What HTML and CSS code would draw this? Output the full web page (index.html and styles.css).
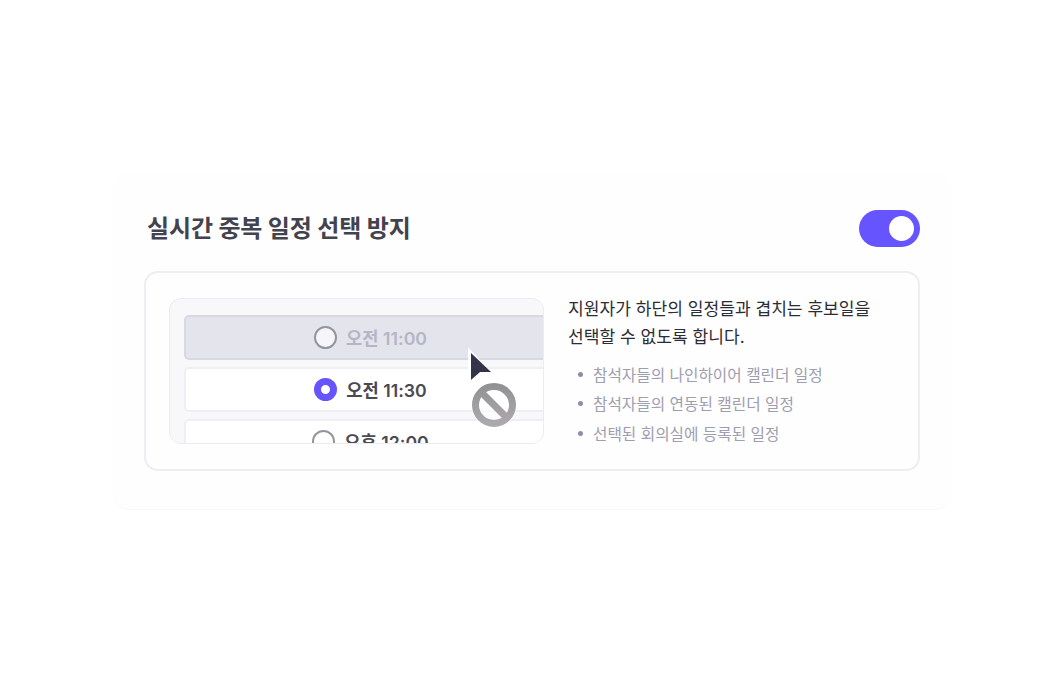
FILE: index.html
```html
<!DOCTYPE html>
<html lang="ko">
<head>
  <meta charset="UTF-8">
  <meta name="viewport" content="width=device-width, initial-scale=1.0">
  <title>실시간 중복 일정 선택 방지</title>
  <link rel="stylesheet" href="styles.css">
</head>
<body>
  <div class="card">
    <div class="card-header">
      <h1>실시간 중복 일정 선택 방지</h1>
      <div class="toggle"><span class="toggle-knob"></span></div>
    </div>

    <div class="panel">
      <div class="preview">
        <div class="slot-list">
          <div class="slot slot-disabled">
            <span class="radio"></span>
            <span>오전 11:00</span>
          </div>
          <div class="slot">
            <span class="radio radio-on"></span>
            <span>오전 11:30</span>
          </div>
          <div class="slot">
            <span class="radio"></span>
            <span>오후 12:00</span>
          </div>
        </div>

        <svg class="cursor" width="28" height="38" viewBox="0 0 28 38" xmlns="http://www.w3.org/2000/svg">
          <path d="M2 1v34l3 1 10-9h11z" fill="#ffffff" opacity="0.9"/>
          <path d="M5 7v27l9-8h11z" fill="#33344a"/>
        </svg>
        <svg class="blocked" width="46" height="46" viewBox="0 0 46 46" xmlns="http://www.w3.org/2000/svg">
          <defs>
            <linearGradient id="blocked-fill" gradientUnits="userSpaceOnUse" x1="0" y1="0" x2="0" y2="46">
              <stop offset="0" stop-color="#8f8f91"/>
              <stop offset="1" stop-color="#aeacb0"/>
            </linearGradient>
          </defs>
          <circle cx="23" cy="23" r="23" fill="#ffffff" opacity="0.5"/>
          <circle cx="23" cy="23" r="18.500" fill="none" stroke="url(#blocked-fill)" stroke-width="7"/>
          <line x1="11" y1="11" x2="35" y2="35" stroke="url(#blocked-fill)" stroke-width="7"/>
        </svg>
      </div>

      <div class="desc">
        <p>지원자가 하단의 일정들과 겹치는 후보일을<br>선택할 수 없도록 합니다.</p>
        <ul>
          <li>참석자들의 나인하이어 캘린더 일정</li>
          <li>참석자들의 연동된 캘린더 일정</li>
          <li>선택된 회의실에 등록된 일정</li>
        </ul>
      </div>
    </div>
  </div>
</body>
</html>
```

FILE: styles.css
```css
:root {
  --primary: #6654ff;
  --text: #2c2c35;
  --text-secondary: #9f9db0;
  --border: #eeedf4;
  --card: #fefefe;
}

* {
  margin: 0;
  padding: 0;
  box-sizing: border-box;
  font-family: Inter, "Noto Sans CJK KR", sans-serif;
}

body {
  display: flex;
  align-items: center;
  justify-content: center;
  height: 680px;
  background-color: #ffffff;
  overflow: hidden;
}

.card {
  width: 838px;
  height: 339px;
  padding: 39px 31px 0;
  background-color: var(--card);
  border-bottom: 1px solid #f8f8fa;
  border-radius: 16px;
}

.card-header {
  display: flex;
  align-items: center;
  justify-content: space-between;
  height: 37px;
  margin-bottom: 24px;
}

h1 {
  padding: 0 0 3px 3px;
  font-size: 24px;
  font-weight: 700;
  letter-spacing: -0.13px;
  color: #43434e;
}

.toggle {
  display: flex;
  align-items: center;
  justify-content: flex-end;
  width: 61px;
  height: 37px;
  padding-right: 6px;
  background-color: var(--primary);
  border-radius: 19px;
}

.toggle-knob {
  width: 25px;
  height: 25px;
  background-color: #ffffff;
  border-radius: 50%;
}

.panel {
  display: flex;
  gap: 24px;
  height: 200px;
  padding: 22px 0 0 23px;
  background-color: #fefefe;
  border: 2px solid var(--border);
  border-radius: 14px;
}

.preview {
  position: relative;
  flex: none;
  width: 375px;
  height: 146px;
  margin-top: 3px;
  padding: 16px 0 0 14px;
  background-color: #f8f8fb;
  border: 1px solid #ebebf1;
  border-radius: 12px;
  overflow: hidden;
}

.slot-list {
  display: flex;
  flex-direction: column;
  gap: 7px;
  width: 380px;
}

.slot {
  display: flex;
  align-items: center;
  justify-content: center;
  gap: 9px;
  flex: none;
  height: 45px;
  padding-right: 7px;
  font-size: 17.700px;
  font-weight: 600;
  color: #4a4a53;
  background-color: #ffffff;
  border: 2px solid #eeeef3;
  border-radius: 5px;
}

.slot-disabled {
  color: #b5b5c6;
  background-color: #e3e4ec;
  border-color: #d8d8e2;
}

.radio {
  flex: none;
  width: 23px;
  height: 23px;
  background-color: #ffffff;
  border: 2px solid #94949e;
  border-radius: 50%;
}

.slot-disabled .radio {
  background-color: #f6f6fa;
}

.radio-on {
  border: 7px solid var(--primary);
}

.cursor {
  position: absolute;
  left: 296px;
  top: 47px;
}

.blocked {
  position: absolute;
  left: 301px;
  top: 83px;
}

.desc p {
  font-size: 17.100px;
  line-height: 28.500px;
  color: var(--text);
}

.desc ul {
  margin-top: 8px;
  list-style: none;
}

.desc li {
  display: flex;
  align-items: center;
  gap: 10px;
  height: 29.500px;
  padding-left: 10px;
  font-size: 15.700px;
  color: var(--text-secondary);
}

.desc li::before {
  content: '';
  width: 5px;
  height: 5px;
  background-color: #8f8da3;
  border-radius: 50%;
}
```
